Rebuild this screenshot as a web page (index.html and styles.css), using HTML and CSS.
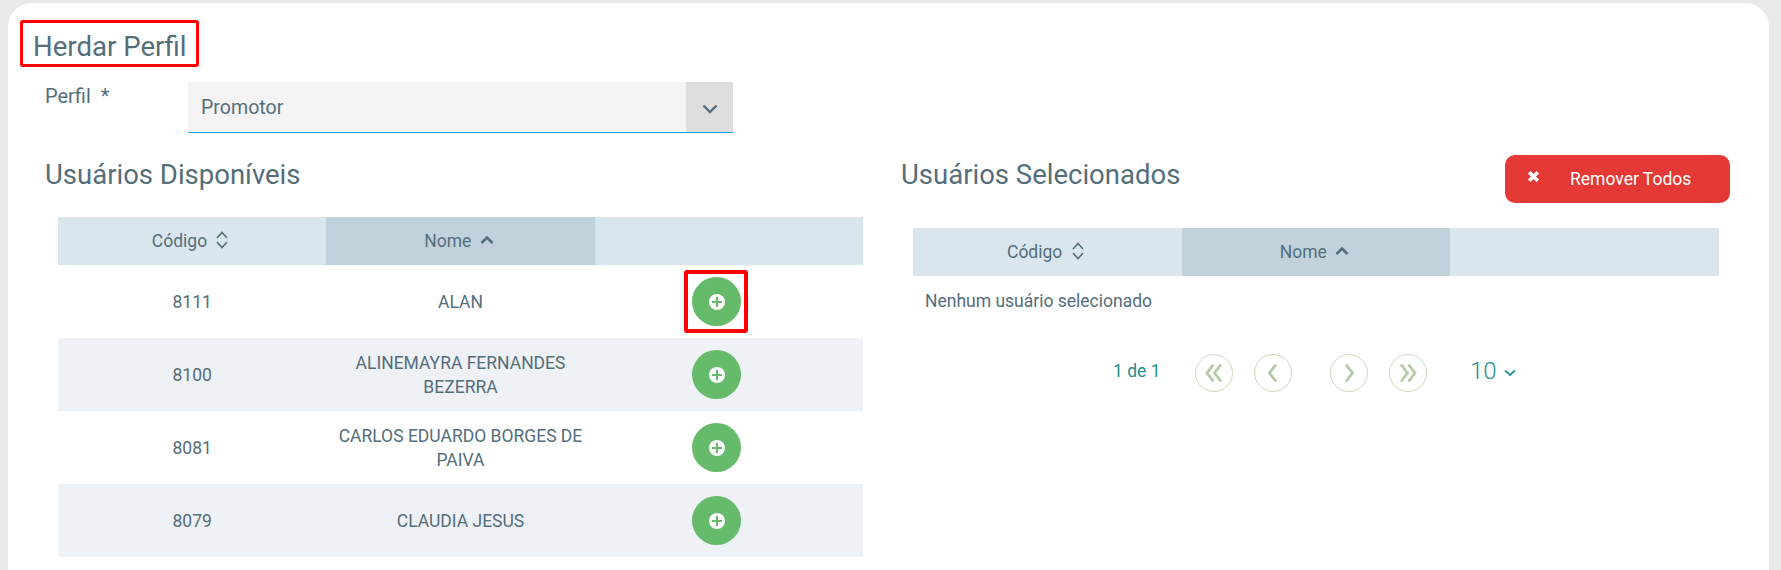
FILE: index.html
```html
<!DOCTYPE html>
<html>
<head>
    <meta charset="UTF-8">
    <title>Herdar Perfil</title>
    <link rel="stylesheet" href="styles.css">
</head>
<body>
<div class="panel">
    <h1 class="page-title">Herdar Perfil</h1>

    <div class="form-row">
        <label class="form-label">Perfil&nbsp; *</label>
        <div class="select-box">
            <span class="select-value">Promotor</span>
            <span class="select-arrow">
                <svg width="16" height="10" viewBox="0 0 16 10"><path d="M1.5 1.5 L8 8 L14.5 1.5" fill="none" stroke="#546e7a" stroke-width="2.4"/></svg>
            </span>
        </div>
    </div>

    <div class="columns">
        <!-- usuarios disponiveis -->
        <div class="col">
            <div class="col-head">
                <h2 class="col-title">Usuários Disponíveis</h2>
            </div>
            <table class="users">
                <thead>
                    <tr>
                        <th>Código <svg class="sort" width="14" height="18" viewBox="0 0 14 18"><path d="M2 7 L7 1.5 L12 7 M2 11 L7 16.5 L12 11" fill="none" stroke="#546e7a" stroke-width="1.6"/></svg></th>
                        <th class="active">Nome <svg class="sort" width="14" height="10" viewBox="0 0 14 10"><path d="M1.5 8 L7 2.5 L12.5 8" fill="none" stroke="#546e7a" stroke-width="2.6"/></svg></th>
                        <th></th>
                    </tr>
                </thead>
                <tbody>
                    <tr>
                        <td>8111</td>
                        <td>ALAN</td>
                        <td class="action"><span class="add-mark"><button class="add-btn"><span class="add-icon"></span></button></span></td>
                    </tr>
                    <tr>
                        <td>8100</td>
                        <td>ALINEMAYRA FERNANDES BEZERRA</td>
                        <td class="action"><button class="add-btn"><span class="add-icon"></span></button></td>
                    </tr>
                    <tr>
                        <td>8081</td>
                        <td>CARLOS EDUARDO BORGES DE PAIVA</td>
                        <td class="action"><button class="add-btn"><span class="add-icon"></span></button></td>
                    </tr>
                    <tr>
                        <td>8079</td>
                        <td>CLAUDIA JESUS</td>
                        <td class="action"><button class="add-btn"><span class="add-icon"></span></button></td>
                    </tr>
                </tbody>
            </table>
        </div>

        <!-- usuarios selecionados -->
        <div class="col col-right">
            <div class="col-head">
                <h2 class="col-title">Usuários Selecionados</h2>
                <button class="remove-btn">
                    <svg width="13" height="13" viewBox="0 0 13 13"><path d="M2.2 2.2 L10.8 10.8 M10.8 2.2 L2.2 10.8" fill="none" stroke="#fff" stroke-width="3.6"/></svg>
                    <span>Remover Todos</span>
                </button>
            </div>
            <table class="users">
                <thead>
                    <tr>
                        <th>Código <svg class="sort" width="14" height="18" viewBox="0 0 14 18"><path d="M2 7 L7 1.5 L12 7 M2 11 L7 16.5 L12 11" fill="none" stroke="#546e7a" stroke-width="1.6"/></svg></th>
                        <th class="active">Nome <svg class="sort" width="14" height="10" viewBox="0 0 14 10"><path d="M1.5 8 L7 2.5 L12.5 8" fill="none" stroke="#546e7a" stroke-width="2.6"/></svg></th>
                        <th></th>
                    </tr>
                </thead>
            </table>
            <p class="empty">Nenhum usuário selecionado</p>
            <div class="pager">
                <span class="pager-count">1 de 1</span>
                <button class="page-btn first">
                    <svg width="22" height="22" viewBox="0 0 22 22"><path d="M10.5 2.5 L4 11 L10.5 19.5 M18 2.5 L11.5 11 L18 19.5" fill="none" stroke="#b5caa5" stroke-width="2.8"/></svg>
                </button>
                <button class="page-btn prev">
                    <svg width="22" height="22" viewBox="0 0 22 22"><path d="M14 2.5 L7.5 11 L14 19.5" fill="none" stroke="#b5caa5" stroke-width="2.8"/></svg>
                </button>
                <button class="page-btn next">
                    <svg width="22" height="22" viewBox="0 0 22 22"><path d="M8 2.5 L14.5 11 L8 19.5" fill="none" stroke="#b5caa5" stroke-width="2.8"/></svg>
                </button>
                <button class="page-btn last">
                    <svg width="22" height="22" viewBox="0 0 22 22"><path d="M4 2.5 L10.5 11 L4 19.5 M11.5 2.5 L18 11 L11.5 19.5" fill="none" stroke="#b5caa5" stroke-width="2.8"/></svg>
                </button>
                <span class="page-size">10
                    <svg width="12" height="8" viewBox="0 0 12 8"><path d="M1 1.5 L6 6 L11 1.5" fill="none" stroke="#1f9a96" stroke-width="1.8"/></svg>
                </span>
            </div>
        </div>
    </div>
</div>
</body>
</html>
```

FILE: styles.css
```css
html, body {
  margin: 0;
  height: 570px;
  overflow: hidden;
}

body {
  background-color: #e9e9e9;
  padding: 3px 12px 0 8px;
  box-sizing: border-box;
  font-family: Roboto, "Liberation Sans", sans-serif;
  color: #546e7a;
}

.panel {
  background-color: #fff;
  border-radius: 24px 24px 0 0;
  height: 567px;
  overflow: hidden;
  padding: 17px 38px 0 12px;
  box-sizing: border-box;
}

/* titulo com marca vermelha */
.page-title {
  display: inline-block;
  margin: 0;
  padding: 0 10px;
  width: 179px;
  height: 47px;
  line-height: 47px;
  box-sizing: border-box;
  border: 3px solid #f00;
  border-radius: 3px;
  font-size: 27.6px;
  font-weight: 400;
  white-space: nowrap;
  vertical-align: top;
}

.form-row {
  display: flex;
  margin: 15px 0 0 25px;
}

.form-label {
  width: 143px;
  padding-top: 3px;
  font-size: 20px;
  line-height: 22px;
}

.select-box {
  display: flex;
  width: 545px;
  height: 51px;
  box-sizing: border-box;
  background-color: #f4f4f4;
  border-bottom: 1px solid #03a9f4;
}

.select-value {
  flex: 1;
  padding-left: 13px;
  font-size: 19.6px;
  line-height: 52px;
}

.select-arrow {
  display: flex;
  align-items: center;
  justify-content: center;
  width: 47px;
  padding-top: 3px;
  box-sizing: border-box;
  background-color: #dedede;
}

.columns {
  display: flex;
  gap: 26px;
  margin-left: 26px;
}

.col {
  width: 829px;
}

.col-right {
  width: 830px;
}

.col-head {
  display: flex;
  justify-content: space-between;
  height: 84px;
}

.col-right .col-head {
  height: 95px;
}

.col-title {
  margin: 27px 0 0;
  font-size: 27.5px;
  line-height: 30px;
  font-weight: 400;
}

.col:first-child .col-title {
  margin-left: -1px;
}

.users {
  width: calc(100% - 24px);
  margin: 0 12px;
  border-collapse: collapse;
  table-layout: fixed;
}

.users th {
  height: 48px;
  padding: 0 3px 0 0;
  background-color: #d9e6ee;
  font-size: 17.5px;
  font-weight: 400;
}

.users th.active {
  background-color: #c0d3dc;
}

.sort {
  margin-left: 4px;
  vertical-align: middle;
  position: relative;
  top: -2px;
}

.users td {
  height: 73px;
  padding: 0 12px;
  text-align: center;
  font-size: 17.5px;
  line-height: 24px;
  box-sizing: border-box;
}

.users td.action {
  padding-right: 36px;
}

.users tbody tr:nth-child(even) {
  background-color: #eef1f6;
}

.add-btn {
  width: 49px;
  height: 49px;
  padding: 0;
  border: 0;
  border-radius: 50%;
  background-color: #66bb6a;
  display: inline-flex;
  align-items: center;
  justify-content: center;
  vertical-align: middle;
}

.add-icon {
  position: relative;
  width: 16px;
  height: 16px;
  border-radius: 50%;
  background-color: #fff;
}

.add-icon::before,
.add-icon::after {
  content: "";
  position: absolute;
  background-color: #66bb6a;
}

.add-icon::before {
  left: 3px;
  right: 3px;
  top: 7px;
  height: 2px;
}

.add-icon::after {
  top: 3px;
  bottom: 3px;
  left: 7px;
  width: 2px;
}

.add-mark {
  display: inline-flex;
  align-items: center;
  justify-content: center;
  width: 64px;
  height: 63px;
  margin-right: 2px;
  padding-left: 2px;
  box-sizing: border-box;
  border: 4px solid #f00;
  border-radius: 3px;
  vertical-align: middle;
}

.remove-btn {
  display: flex;
  align-items: center;
  width: 225px;
  height: 48px;
  margin-top: 22px;
  margin-right: 1px;
  padding: 0 0 0 22px;
  border: 0;
  border-radius: 10px;
  background-color: #e53935;
  color: #fff;
  font-family: inherit;
  font-size: 17.5px;
}

.remove-btn svg {
  margin-bottom: 6px;
}

.remove-btn span {
  margin-left: 30px;
}

.empty {
  margin: 0 0 0 24px;
  font-size: 17.5px;
  line-height: 50px;
}

.pager {
  display: flex;
  align-items: center;
  margin: 28px 0 0 212px;
  color: #1f8f8a;
}

.pager-count {
  width: 82px;
  font-size: 17.5px;
  position: relative;
  top: -2px;
}

.page-btn {
  display: flex;
  align-items: center;
  justify-content: center;
  width: 38px;
  height: 38px;
  padding: 0;
  border: 1px solid #cddabf;
  border-radius: 50%;
  background-color: #fff;
}

.prev {
  margin-left: 21px;
}

.next {
  margin-left: 38px;
}

.last {
  margin-left: 21px;
}

.page-size {
  margin-left: 43px;
  margin-top: -4px;
  font-size: 24px;
  font-weight: 300;
}

.page-size svg {
  margin-left: 2px;
  vertical-align: middle;
}
```
